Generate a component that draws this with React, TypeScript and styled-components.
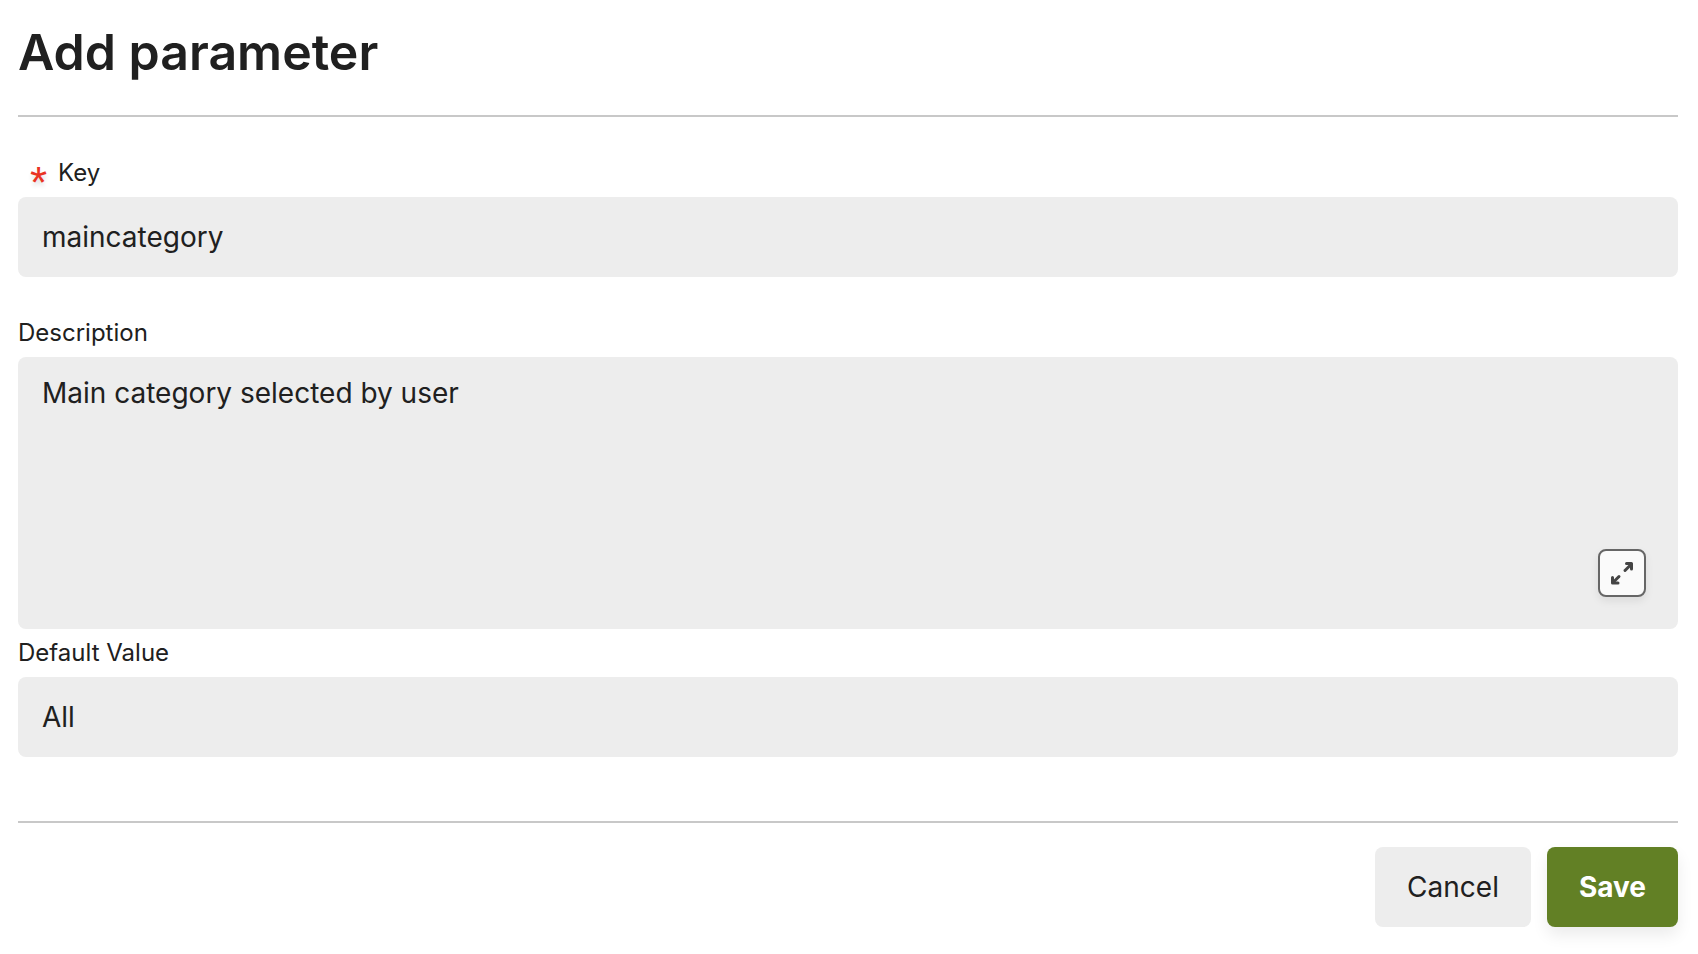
import React, { useState } from "react";
import styled, { createGlobalStyle, css } from "styled-components";

const GlobalStyle = createGlobalStyle`
  *, *::before, *::after { box-sizing: border-box; }
  body {
    margin: 0;
    background: #fff;
    color: #202020;
    font-family: Inter, "Liberation Sans", sans-serif;
    font-size: 28px;
    line-height: 40px;
  }
`;

const Dialog = styled.form`
  padding: 20px 20px 24px 18px;
`;

const Header = styled.header`
  padding-bottom: 31px;
  border-bottom: 2px solid #c8c8c8;
`;

const Title = styled.h1`
  margin: 0;
  font-size: 50px;
  line-height: 64px;
  font-weight: 600;
`;

const Fields = styled.div`
  padding: 32px 0 64px;
`;

const Field = styled.div<{ $spaced?: boolean }>`
  margin-bottom: ${(p) => (p.$spaced ? 32 : 0)}px;
`;

const Label = styled.label`
  display: flex;
  align-items: center;
  height: 48px;
  font-size: 24px;
`;

const Required = styled.span`
  width: 40px;
  padding: 20px 0 0 12px;
  color: #ea3323;
  font-family: "Liberation Sans", Arial, sans-serif;
  font-size: 44px;
  line-height: 24px;
  text-shadow: 0 4px 4px rgba(0, 0, 0, 0.12);
`;

const control = css`
  display: block;
  width: 100%;
  border: 0;
  border-radius: 8px;
  background: #ededed;
  color: inherit;
  font: inherit;
  outline: none;
`;

const TextInput = styled.input`
  ${control}
  height: 80px;
  padding: 0 24px;
`;

const AreaWrap = styled.div`
  position: relative;
`;

const TextArea = styled.textarea`
  ${control}
  height: 272px;
  padding: 16px 24px;
  resize: none;
`;

const ExpandButton = styled.button`
  position: absolute;
  right: 32px;
  bottom: 32px;
  display: flex;
  align-items: center;
  justify-content: center;
  width: 48px;
  height: 48px;
  padding: 0;
  border: 2px solid #666;
  border-radius: 8px;
  background: #fafafa;
  color: #444;
  box-shadow: 0 4px 8px rgba(0, 0, 0, 0.08);
`;

const Footer = styled.footer`
  display: flex;
  justify-content: flex-end;
  gap: 16px;
  padding-top: 24px;
  border-top: 2px solid #c8c8c8;
`;

const Button = styled.button<{ $primary?: boolean }>`
  height: 80px;
  padding: 0 32px;
  border: 0;
  border-radius: 8px;
  font: inherit;
  font-weight: ${(p) => (p.$primary ? 700 : 400)};
  color: ${(p) => (p.$primary ? "#fff" : "#202020")};
  background: ${(p) => (p.$primary ? "#628025" : "#ededed")};
  box-shadow: ${(p) => (p.$primary ? "0 8px 16px rgba(0, 0, 0, 0.08)" : "none")};
`;

function ExpandIcon() {
  return (
    <svg width="24" height="24" viewBox="0 0 24 24" fill="none" stroke="currentColor" strokeWidth="3" strokeLinecap="round" strokeLinejoin="round" aria-hidden="true">
      <path d="M15 9.500 21 3.500" />
      <path d="M16.500 2.500H21.500V8" />
      <path d="M9 15.500 3 21.500" />
      <path d="M2.500 16.500V22H8" />
    </svg>
  );
}

export default function App() {
  const [key, setKey] = useState("maincategory");
  const [description, setDescription] = useState("Main category selected by user");
  const [value, setValue] = useState("All");

  return (
    <>
      <GlobalStyle />
      <Dialog onSubmit={(e) => e.preventDefault()}>
        <Header>
          <Title>Add parameter</Title>
        </Header>
        <Fields>
          <Field $spaced>
            <Label htmlFor="key">
              <Required aria-hidden="true">*</Required>
              Key
            </Label>
            <TextInput id="key" required value={key} onChange={(e) => setKey(e.target.value)} />
          </Field>
          <Field>
            <Label htmlFor="description">Description</Label>
            <AreaWrap>
              <TextArea id="description" value={description} onChange={(e) => setDescription(e.target.value)} />
              <ExpandButton type="button" aria-label="Expand">
                <ExpandIcon />
              </ExpandButton>
            </AreaWrap>
          </Field>
          <Field>
            <Label htmlFor="default-value">Default Value</Label>
            <TextInput id="default-value" value={value} onChange={(e) => setValue(e.target.value)} />
          </Field>
        </Fields>
        <Footer>
          <Button type="button">Cancel</Button>
          <Button type="submit" $primary>
            Save
          </Button>
        </Footer>
      </Dialog>
    </>
  );
}
